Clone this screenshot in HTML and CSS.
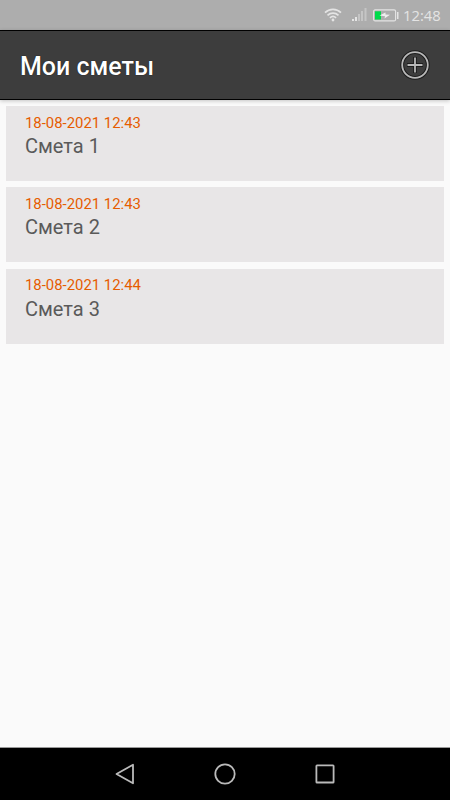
FILE: index.html
```html
<!DOCTYPE html>
<html lang="ru">
<head>
<meta charset="utf-8">
<title>Мои сметы</title>
<link rel="stylesheet" href="styles.css">
</head>
<body>
<div class="status">
  <svg class="wifi" width="18" height="14" viewBox="0 0 18 14" fill="none" stroke="#e4e4e4" stroke-width="1.7"><path d="M1 4.700C5.500.3 12.500.3 17 4.700M3.500 7.300C6.700 4.300 11.300 4.300 14.500 7.300M5.900 9.800C7.700 8.200 10.300 8.200 12.100 9.800"/><circle cx="9" cy="12" r="1.400" fill="#e4e4e4" stroke="none"/></svg>
  <svg class="signal" width="15" height="14" viewBox="0 0 15 14"><path fill="#e4e4e4" d="M0 11h2v2H0zM3 9h2v4H3z"/><path fill="#c5c5c5" d="M6 6h2v7H6zM9 3h2v10H9zM12.500 0h2v13h-2z"/></svg>
  <svg class="battery" width="26" height="13" viewBox="0 0 26 13"><rect x=".6" y=".9" width="22" height="11" rx="1.500" fill="none" stroke="#e4e4e4" stroke-width="1.100"/><path fill="#e4e4e4" d="M24 3h1.500v7H24z"/><path fill="#00db4b" d="M2 2.300h6v8.200H2z"/><path fill="#eeeeee" d="M6.500 6.600l6-3v2l4.500.2-5.500 3.600.5-2.200z"/></svg>
  <span class="clock">12:48</span>
</div>
<header class="bar">
  <h1>Мои сметы</h1>
  <svg class="add" width="32" height="32" viewBox="0 0 32 32" fill="none"><g stroke="#1d1d1d" stroke-width="3.800"><circle cx="16" cy="16" r="12.800"/><path d="M16 8v16M8 16h16"/></g><g stroke="#b9b9b9" stroke-width="1.800"><circle cx="16" cy="16" r="12.800"/><path d="M16 8.500v15M8.500 16h15"/></g></svg>
</header>
<main>
  <article><time>18-08-2021 12:43</time><h2>Смета 1</h2></article>
  <article><time>18-08-2021 12:43</time><h2>Смета 2</h2></article>
  <article><time>18-08-2021 12:44</time><h2>Смета 3</h2></article>
</main>
<nav>
  <svg width="24" height="24" viewBox="0 0 24 24"><path d="M3.500 12L20 2.700v18.600z"/></svg>
  <svg width="24" height="24" viewBox="0 0 24 24"><circle cx="12" cy="12" r="9.700"/></svg>
  <svg width="24" height="24" viewBox="0 0 24 24"><rect x="3.400" y="3.300" width="17.200" height="17.200" rx=".6"/></svg>
</nav>
</body>
</html>
```
FILE: styles.css
```css
* { box-sizing: border-box; }
body {
  margin: 0;
  height: 800px;
  display: flex;
  flex-direction: column;
  background: #fafafa;
  font-family: Roboto, sans-serif;
  overflow: hidden;
}
svg { display: block; flex: none; }
.status {
  height: 30px;
  flex: none;
  display: flex;
  align-items: center;
  padding: 0 10px 0 324px;
  background: #adadad;
  color: #e4e4e4;
}
.signal { margin-left: 10px; }
.battery { margin-left: 6px; }
.clock {
  margin-left: 4px;
  font: 14.800px/20px "Open Sans", "Noto Sans", sans-serif;
  white-space: nowrap;
}
.bar {
  height: 70px;
  flex: none;
  display: flex;
  align-items: center;
  justify-content: space-between;
  padding: 0 19px 0 20px;
  background: #3d3d3d;
  border-top: 1px solid #000;
  border-bottom: 1px solid #000;
  box-shadow: 0 1px 4px rgba(0, 0, 0, .22);
}
h1 {
  margin: 4px 0 0;
  font-size: 25px;
  line-height: 30px;
  font-weight: 500;
  color: #fff;
  text-shadow: 0 0 1px #000;
}
main {
  flex: 1;
  display: flex;
  flex-direction: column;
  gap: 6.300px;
  padding: 6px 6px 0;
}
article {
  height: 75px;
  padding: 7.600px 19px 0;
  background: #e8e6e7;
}
time {
  display: block;
  font-size: 14.900px;
  line-height: 18px;
  color: #e65c00;
}
h2 {
  margin: 2.500px 0 0;
  font-size: 20px;
  line-height: 24px;
  font-weight: 400;
  color: #5a5a5a;
}
nav {
  height: 53px;
  flex: none;
  display: flex;
  justify-content: center;
  align-items: center;
  gap: 76px;
  background: #000;
  border-top: 1px solid #999;
}
nav svg {
  fill: none;
  stroke: #bababa;
  stroke-width: 1.800;
  stroke-linejoin: round;
}
```
